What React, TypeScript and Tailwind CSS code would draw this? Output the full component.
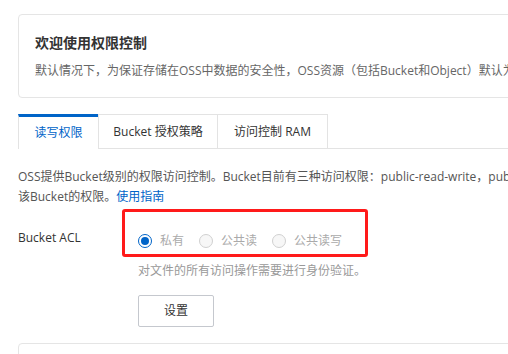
export default function App() {
  const font = { fontFamily: '"Open Sans", "Noto Sans CJK SC", sans-serif' };
  const radios = [
    { label: '私有', checked: true },
    { label: '公共读', checked: false },
    { label: '公共读写', checked: false },
  ];

  return (
    <div
      className="relative w-[508px] h-[354px] overflow-hidden bg-white pl-[18px] pt-[14px] text-[12px] text-[#555]"
      style={font}
    >
      <div className="w-[560px]">
        {/* welcome card */}
        <div className="border border-[#e5e5e5] rounded-[4px] pl-[16px] pt-[18px] pb-[16px] flex flex-col gap-[8px]">
          <h2 className="text-[14px] leading-[20px] font-bold text-[#333]">欢迎使用权限控制</h2>
          <p className="leading-[20px] whitespace-nowrap text-[#666]">
            默认情况下，为保证存储在OSS中数据的安全性，OSS资源（包括Bucket和Object）默认为私有权限，
          </p>
        </div>

        {/* tabs */}
        <div className="mt-[16px] flex h-[35px] border-b border-[#e3e3e3]">
          <div className="w-[80px] flex items-center justify-center border-t-[3px] border-t-[#0064c8] border-l border-l-[#e3e3e3] bg-white text-[#0064c8] -mb-px">
            读写权限
          </div>
          <div className="w-[120px] flex items-center justify-center border-t border-r border-l border-[#e3e3e3] text-[#333]">
            Bucket 授权策略
          </div>
          <div className="w-[110px] flex items-center justify-center border-t border-r border-[#e3e3e3] text-[#333]">
            访问控制 RAM
          </div>
        </div>

        <p className="mt-[18px] leading-[20px] whitespace-nowrap">
          OSS提供Bucket级别的权限访问控制。Bucket目前有三种访问权限：public-read-write，public-read和private，
          <br />
          该Bucket的权限。<span className="text-[#0064c8]">使用指南</span>
        </p>

        {/* ACL row */}
        <div className="mt-[21px] flex">
          <div className="w-[120px] leading-[20px] text-[#333]">Bucket ACL</div>
          <div className="flex flex-col pt-[3px]">
            <div className="flex items-center gap-[15px] h-[20px]">
              {radios.map((r) => (
                <label key={r.label} className="flex items-center gap-[8px] text-[#aaa]">
                  <span
                    className={`w-[14px] h-[14px] rounded-full border flex items-center justify-center ${
                      r.checked ? 'border-[#0064c8] bg-white' : 'border-[#d0d0d0] bg-[#f7f7f7]'
                    }`}
                  >
                    {r.checked && <span className="w-[8px] h-[8px] rounded-full bg-[#0064c8]" />}
                  </span>
                  {r.label}
                </label>
              ))}
            </div>
            <p className="mt-[10px] leading-[20px] text-[#999]">对文件的所有访问操作需要进行身份验证。</p>
            <button className="mt-[14px] w-[76px] h-[32px] border border-[#c5c8ce] rounded-[2px] bg-white text-[#333]">
              设置
            </button>
          </div>
        </div>

        <div className="mt-[16px] h-[40px] border border-[#e5e5e5] rounded-[4px]" />
      </div>

      {/* annotation */}
      <div className="absolute left-[122px] top-[209px] w-[246px] h-[48px] border-[3px] border-[#ff1a1a] rounded-[3px]" />
    </div>
  );
}
